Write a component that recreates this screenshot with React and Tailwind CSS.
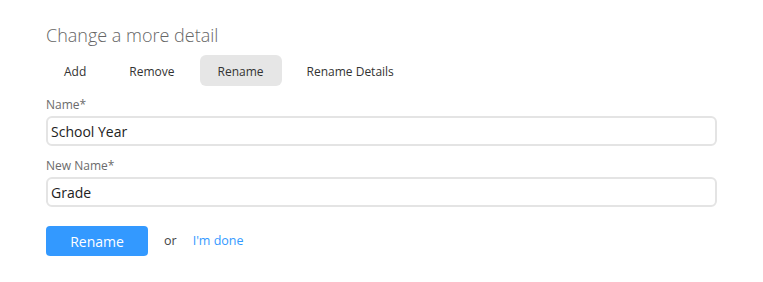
import { useState } from 'react';

const tabs = ['Add', 'Remove', 'Rename', 'Rename Details'];

export default function App() {
  const [active, setActive] = useState('Rename');
  const [name, setName] = useState('School Year');
  const [newName, setNewName] = useState('Grade');

  return (
    <div
      className="w-[763px] h-[282px] bg-white pl-[46px] pr-[46px] pt-[22px]"
      style={{ fontFamily: '"Open Sans", "Noto Sans", sans-serif' }}
    >
      {/* Title */}
      <h2 className="text-[18px] leading-[26px] font-light text-[#666]">Change a more detail</h2>

      {/* Tabs */}
      <div className="flex gap-[7px] mt-[7px]">
        {tabs.map((tab) => (
          <button
            key={tab}
            onClick={() => setActive(tab)}
            className={`h-[31px] px-[18px] pt-[2px] rounded-[6px] text-[12px] text-[#333] ${
              active === tab ? 'bg-[#e6e6e6]' : 'bg-transparent'
            }`}
          >
            {tab}
          </button>
        ))}
      </div>

      {/* Fields */}
      <label className="block mt-[11px] text-[12px] leading-[16px] text-[#6b6b6b]">Name*</label>
      <input
        value={name}
        onChange={(e) => setName(e.target.value)}
        className="block mt-[3px] w-[671px] h-[30px] border-2 border-[#e4e4e4] rounded-[6px] px-[3px] text-[14px] text-[#222] outline-none"
      />

      <label className="block mt-[12px] text-[12px] leading-[16px] text-[#6b6b6b]">New Name*</label>
      <input
        value={newName}
        onChange={(e) => setNewName(e.target.value)}
        className="block mt-[3px] w-[671px] h-[30px] border-2 border-[#e4e4e4] rounded-[6px] px-[3px] text-[14px] text-[#222] outline-none"
      />

      {/* Actions */}
      <div className="flex items-center mt-[19px]">
        <button className="w-[102px] h-[30px] rounded-[4px] bg-[#3399ff] text-white text-[14px] font-medium">
          Rename
        </button>
        <span className="ml-[16px] text-[12.5px] text-[#444]">or</span>
        <a href="#" className="ml-[16px] text-[12.5px] text-[#3399ff]">I'm done</a>
      </div>
    </div>
  );
}
